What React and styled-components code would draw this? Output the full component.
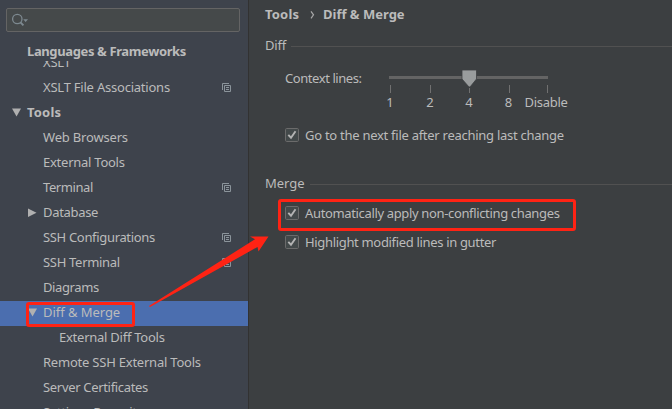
import React from "react";
import styled, { createGlobalStyle } from "styled-components";

const GlobalStyle = createGlobalStyle`
  * { box-sizing: border-box; }
  body { margin: 0; overflow: hidden; background: #3c3f41; }
`;

const Window = styled.div`
  position: relative;
  display: flex;
  width: 672px;
  height: 409px;
  overflow: hidden;
  background: #3c3f41;
  color: #bbbbbb;
  font: 13px/18px "Noto Sans", "Open Sans", sans-serif;
  white-space: nowrap;
`;

const Sidebar = styled.aside`
  display: flex;
  flex-direction: column;
  flex: 0 0 249px;
  padding-top: 8px;
  background: #3e434c;
  border-right: 1px solid #323232;
`;

const SearchField = styled.div`
  flex: 0 0 24px;
  margin: 0 8px 0 6px;
  padding: 4px 0 0 5px;
  border: 1px solid #646464;
  border-radius: 2px;
  background: #45494a;
  line-height: 0;
`;

const GroupTitle = styled.div`
  flex: 0 0 29px;
  padding: 10px 0 0 27px;
  font-weight: 700;
  letter-spacing: -0.38px;
`;

const Tree = styled.div`
  flex: 1;
  min-height: 0;
  overflow: hidden;
`;

const TreeRow = styled.div`
  display: flex;
  align-items: center;
  height: 25px;
  padding: 0 17px 2px ${(p) => p.$indent}px;
  background: ${(p) => (p.$selected ? "#4b6eaf" : "transparent")};
  font-weight: ${(p) => (p.$bold ? 700 : 400)};

  &:first-child { margin-top: -10px; }
`;

const Arrow = styled.svg`
  flex: 0 0 9px;
  margin: 0 6px 0 -15px;
`;

const Label = styled.span`
  flex: 1;
  letter-spacing: ${(p) => p.$spacing || 0}px;
`;

const RowLabel = styled(Label)`
  margin-bottom: 2px;
`;

const Page = styled.main`
  flex: 1;
  padding: 5px 0 0 16px;
`;

const Breadcrumb = styled.div`
  display: flex;
  height: 18px;
  font-weight: 700;
`;

const Crumb = styled.span`
  width: ${(p) => p.$width}px;
  letter-spacing: ${(p) => p.$spacing || 0}px;
`;

const CrumbChevron = styled.svg`
  flex: 0 0 24px;
`;

const SectionTitle = styled.div`
  display: flex;
  align-items: center;
  gap: 6px;
  height: 18px;
  margin-top: ${(p) => p.$top}px;

  &::after {
    content: "";
    flex: 1;
    height: 1px;
    margin-top: 2px;
    background: #515151;
  }
`;

const SectionName = styled.span`
  width: ${(p) => p.$width}px;
  letter-spacing: ${(p) => p.$spacing || 0}px;
`;

const SliderRow = styled.div`
  display: flex;
  height: 46px;
  margin-top: 14px;
  padding-left: 20px;
`;

const SliderLabel = styled.span`
  width: 94px;
  padding-top: 1px;
  letter-spacing: -0.43px;
`;

const Slider = styled.div`
  width: 190px;
`;

const SliderTrack = styled.svg`
  display: block;
`;

const Ticks = styled.div`
  display: grid;
  grid-template-columns: 22px 58px 20px 59px 16px;
  margin-top: -2px;
  justify-items: center;
`;

const Tick = styled.span`
  letter-spacing: ${(p) => p.$spacing || 0}px;
`;

const CheckRow = styled.div`
  display: flex;
  align-items: center;
  gap: 6px;
  height: 18px;
  margin: ${(p) => p.$top}px 0 0 20px;
`;

const Overlay = styled.svg`
  position: absolute;
  inset: 0;
  pointer-events: none;
`;

function SearchIcon() {
  return (
    <svg width="18" height="15" viewBox="0 0 18 15" fill="none">
      <circle cx="5.3" cy="6" r="4.7" stroke="#7d8990" strokeWidth="1.3" />
      <path d="M8.5 9.4 L11.4 12.4" stroke="#7d8990" strokeWidth="1.9" />
      <path d="M11.2 6.3 H16 L13.6 9.1 Z" fill="#7d8990" />
    </svg>
  );
}

function ProjectIcon() {
  return (
    <svg width="9" height="9" viewBox="0 0 9 9" fill="none" stroke="#8b949b">
      <path d="M0.5 7 V0.5 H7" />
      <path d="M2.5 2.5 H8.5 V8.5 H2.5 Z M4 4.5 H7 M4 6.5 H7" />
    </svg>
  );
}

function TreeArrow({ open }) {
  return (
    <Arrow width="9" height="9" viewBox="0 0 9 9">
      <path d={open ? "M0 0.5 H9 L4.5 8.5 Z" : "M0 0.5 L8.5 4.75 L0 9 Z"} fill="#b0b0b0" />
    </Arrow>
  );
}

function CheckBox() {
  return (
    <svg width="14" height="14" viewBox="0 0 14 14" fill="none">
      <rect x="0.5" y="0.5" width="13" height="13" rx="1.2" fill="#43494a" stroke="#6b6b6b" />
      <path d="M3.3 6.8 L6 9.7 L10.5 3.3" stroke="#b4b4b4" strokeWidth="1.9" />
    </svg>
  );
}

const rows = [
  { text: "XSLT", indent: 43, spacing: -0.2 },
  { text: "XSLT File Associations", indent: 43, project: true, spacing: -0.22 },
  { text: "Tools", indent: 27, bold: true, arrow: "open", spacing: 0.2 },
  { text: "Web Browsers", indent: 43, spacing: -0.18 },
  { text: "External Tools", indent: 43, spacing: -0.25 },
  { text: "Terminal", indent: 43, project: true, spacing: -0.42 },
  { text: "Database", indent: 43, arrow: "closed", spacing: -0.32 },
  { text: "SSH Configurations", indent: 43, project: true, spacing: -0.33 },
  { text: "SSH Terminal", indent: 43, project: true, spacing: -0.3 },
  { text: "Diagrams", indent: 43, spacing: -0.38 },
  { text: "Diff & Merge", indent: 43, arrow: "open", selected: true, spacing: -0.05 },
  { text: "External Diff Tools", indent: 59, spacing: -0.25 },
  { text: "Remote SSH External Tools", indent: 43, spacing: -0.22 },
  { text: "Server Certificates", indent: 43, spacing: -0.32 },
  { text: "Settings Repository", indent: 43, spacing: -0.3 },
];

export default function App() {
  return (
    <Window>
      <GlobalStyle />
      <Sidebar>
        <SearchField><SearchIcon /></SearchField>
        <GroupTitle>Languages &amp; Frameworks</GroupTitle>
        <Tree>
          {rows.map((row) => (
            <TreeRow key={row.text} $indent={row.indent} $bold={row.bold} $selected={row.selected}>
              {row.arrow && <TreeArrow open={row.arrow === "open"} />}
              <RowLabel $spacing={row.spacing}>{row.text}</RowLabel>
              {row.project && <ProjectIcon />}
            </TreeRow>
          ))}
        </Tree>
      </Sidebar>
      <Page>
        <Breadcrumb>
          <Crumb $width={34} $spacing={0.2}>Tools</Crumb>
          <CrumbChevron width="24" height="18" viewBox="0 0 24 18" fill="none">
            <path d="M12 6.3 L14.5 9.8 L12 13.3" stroke="#a8a8a8" strokeWidth="1.2" />
          </CrumbChevron>
          <Crumb>Diff &amp; Merge</Crumb>
        </Breadcrumb>
        <SectionTitle $top={13}><SectionName $width={20} $spacing={-0.2}>Diff</SectionName></SectionTitle>
        <SliderRow>
          <SliderLabel>Context lines:</SliderLabel>
          <Slider>
            <SliderTrack width="190" height="27" viewBox="0 0 190 27">
              <rect x="10" y="8" width="159" height="3" fill="#646464" />
              <path d="M11.5 17 V25 M51.5 17 V25 M90.5 20 V25 M130.5 17 V25 M168.5 17 V25" stroke="#707070" />
              <path d="M83 2 H97.5 V11 L91 19 H90 L83 11 Z" fill="#999c9d" stroke="#3c3f41" strokeWidth="0.8" />
            </SliderTrack>
            <Ticks>
              <Tick>1</Tick><Tick>2</Tick><Tick>4</Tick><Tick>8</Tick><Tick $spacing={-0.3}>Disable</Tick>
            </Ticks>
          </Slider>
        </SliderRow>
        <CheckRow $top={12}><CheckBox /><Label $spacing={-0.27}>Go to the next file after reaching last change</Label></CheckRow>
        <SectionTitle $top={30}><SectionName $width={39}>Merge</SectionName></SectionTitle>
        <CheckRow $top={12}><CheckBox /><Label $spacing={-0.35}>Automatically apply non-conflicting changes</Label></CheckRow>
        <CheckRow $top={11}><CheckBox /><Label $spacing={-0.33}>Highlight modified lines in gutter</Label></CheckRow>
      </Page>
      <Overlay width="672" height="409" viewBox="0 0 672 409" fill="none">
        <rect x="27.5" y="303.5" width="106" height="22" rx="1.5" stroke="#ff2314" strokeWidth="3" />
        <rect x="279.5" y="200.5" width="295" height="29" rx="1.5" stroke="#ff2314" strokeWidth="3" />
        <path d="M149 306 L255 239.3 L250 236.5 L268.5 236.5 L258.5 251.5 L257.5 247 L150 307 Z" fill="#ff2314" />
      </Overlay>
    </Window>
  );
}
